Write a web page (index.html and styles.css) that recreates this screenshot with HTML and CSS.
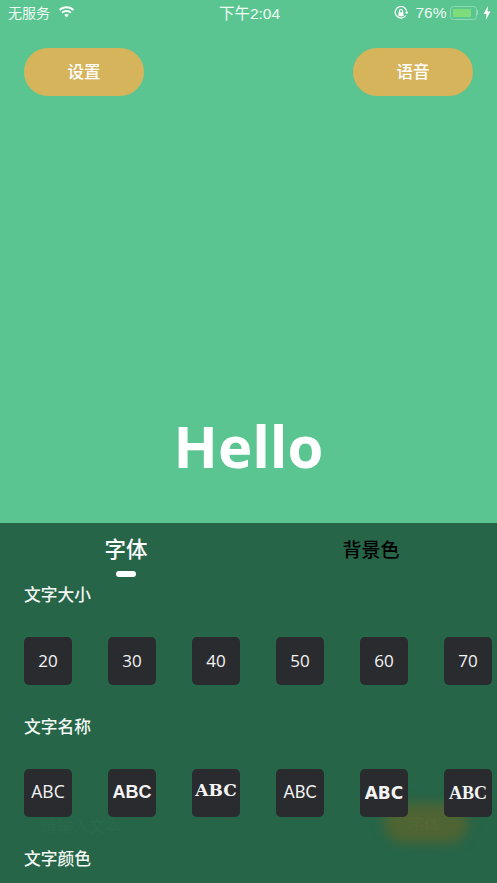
FILE: index.html
```
<!DOCTYPE html>
<html lang="zh">
<head>
<meta charset="utf-8">
<title>Hello</title>
<link rel="stylesheet" href="styles.css">
</head>
<body>
<div class="app">
  <header class="status">
    <div class="status-left">
      <span>无服务</span>
      <svg class="wifi" viewBox="0 0 17 13"><path d="M8.500 2.200c2.400 0 4.600.9 6.300 2.500l1.300-1.400C14.100 1.300 11.400.2 8.500.2S2.900 1.300.9 3.300l1.300 1.400C3.900 3.100 6.100 2.200 8.500 2.200zM8.500 6c1.400 0 2.700.5 3.700 1.500l1.400-1.400C12.200 4.800 10.400 4 8.500 4s-3.700.8-5.100 2.100l1.400 1.400C5.800 6.500 7.100 6 8.500 6zM8.500 7.900c-.9 0-1.700.3-2.300.9l2.300 2.800 2.300-2.800c-.6-.6-1.400-.9-2.300-.9z"/></svg>
    </div>
    <div class="status-time">下午2:04</div>
    <div class="status-right">
      <svg class="lock" viewBox="0 0 14 14"><path class="lock-ring" d="M11.800 9.500A5.800 5.800 0 1 1 12.800 6.500"/><path class="lock-solid" d="M11 6h3.600l-1.800 2.300zM4.500 6.200h5v4h-5z"/><path class="lock-shackle" d="M5.500 6.200V5a1.500 1.500 0 0 1 3 0v1.200"/></svg>
      <span class="pct">76%</span>
      <div class="battery"><div class="battery-level"></div></div>
      <div class="battery-nub"></div>
      <svg class="bolt" viewBox="0 0 8 14"><path d="M5 0 .5 8h3L2.800 14 7.500 5.500h-3z"/></svg>
    </div>
  </header>
  <main class="stage">
    <div class="top-actions">
      <button class="pill">设置</button>
      <button class="pill">语音</button>
    </div>
    <div class="hello">Hello</div>
  </main>
  <section class="panel">
    <div class="ghost-input">请输入文本</div>
    <div class="ghost-pill"></div>
    <div class="ghost-pill-text">字体</div>
    <nav class="tabs">
      <div class="tab tab-active">字体<span class="tab-mark"></span></div>
      <div class="tab tab-plain">背景色</div>
    </nav>
    <h2 class="label">文字大小</h2>
    <div class="row">
      <div class="tile size">20</div>
      <div class="tile size">30</div>
      <div class="tile size">40</div>
      <div class="tile size">50</div>
      <div class="tile size">60</div>
      <div class="tile size">70</div>
    </div>
    <h2 class="label">文字名称</h2>
    <div class="row">
      <div class="tile f1">ABC</div>
      <div class="tile f2">ABC</div>
      <div class="tile f3">ABC</div>
      <div class="tile f4">ABC</div>
      <div class="tile f5">ABC</div>
      <div class="tile f6">ABC</div>
    </div>
    <h2 class="label">文字颜色</h2>
  </section>
</div>
</body>
</html>
```
FILE: styles.css
```
* { box-sizing: border-box; }
html, body { margin: 0; padding: 0; }
body { font-family: "Open Sans", "Noto Sans CJK SC", sans-serif; }
.app {
  width: 497px; height: 883px; overflow: hidden;
  display: flex; flex-direction: column;
  background: #5ac591; color: #fff;
}
.status {
  height: 24px; flex: none;
  display: grid; grid-template-columns: 1fr auto 1fr; align-items: center;
  padding: 0 6px 0 8px;
  font-family: "Liberation Sans", "Noto Sans CJK SC", sans-serif;
  font-size: 15.500px; color: #eefaf3;
}
.status-left { display: flex; align-items: center; gap: 8px; font-size: 14px; }
.wifi { width: 17px; height: 13px; fill: #fff; }
.status-time { position: relative; top: 0; }
.status-right { display: flex; align-items: center; justify-content: flex-end; }
.lock { width: 14px; height: 14px; margin-right: 7px; margin-top: 2px; }
.lock-ring { fill: none; stroke: #fff; stroke-width: 1.200; }
.lock-solid { fill: #fff; }
.lock-shackle { fill: none; stroke: #fff; stroke-width: 1.200; }
.pct { margin-right: 3px; margin-top: 1px; }
.battery {
  width: 27px; height: 14px; padding: 2px 5px 2px 2px; margin-top: 1px;
  border: 1px solid #8fd8b6; border-radius: 3.500px;
}
.battery-level { height: 100%; background: #7fdc7a; border-radius: 1px; }
.battery-nub { width: 1.500px; height: 5px; background: #8fd8b6; margin-right: 5px; margin-top: 1px; }
.bolt { width: 8px; height: 14px; fill: #fff; margin-right: 0; margin-top: 1px; }
.stage { flex: 1; display: flex; flex-direction: column; justify-content: space-between; padding-top: 24px; }
.top-actions { display: flex; justify-content: space-between; padding: 0 24px; }
.pill {
  width: 120px; height: 48px; border: 0; border-radius: 24px; padding: 0 0 2px;
  background: #d6b45b; color: #fff;
  font-family: "Noto Sans CJK SC", sans-serif; font-size: 16.500px; font-weight: 500;
}
.hello {
  text-align: center; font-size: 58px; font-weight: 700; line-height: 72px;
  margin-bottom: 41px;
}
.panel {
  position: relative; flex: none; height: 360px; overflow: hidden;
  background: #266548;
}
.ghost-input {
  position: absolute; left: 41px; top: 290px; font-size: 16px; color: #296a4b;
  font-family: "Noto Sans CJK SC", sans-serif;
}
.ghost-pill {
  position: absolute; left: 384px; top: 280px; width: 84px; height: 40px;
  border-radius: 20px; background: #4f6433; filter: blur(6px);
}
.ghost-pill-text {
  position: absolute; left: 408px; top: 288px; font-size: 16px; color: #566633;
  font-family: "Noto Sans CJK SC", sans-serif;
}
.tabs {
  position: relative; height: 60px;
  display: grid; grid-template-columns: 245px 245px; padding-left: 3.500px;
  font-family: "Noto Sans CJK SC", sans-serif;
}
.tab { position: relative; text-align: center; line-height: 30px; padding-top: 11px; }
.tab-active { font-size: 21.500px; font-weight: 500; color: #fff; padding-top: 10px; }
.tab-plain { font-size: 19px; font-weight: 500; color: #000; }
.tab-mark {
  position: absolute; left: 112.500px; top: 48px;
  width: 20px; height: 6px; border-radius: 3px; background: #fff;
}
.label {
  position: relative; margin: 0; padding-left: 24px; height: 24px;
  font-family: "Noto Sans CJK SC", sans-serif;
  font-size: 16.750px; line-height: 22px; font-weight: 500; color: #f2f7f4;
}
.row { position: relative; display: flex; gap: 36px; padding: 30px 0 30px 24px; }
.tile {
  flex: none; width: 48px; height: 48px; border-radius: 5px;
  background: #2a2b2f; color: #f4f4f4;
  display: flex; align-items: center; justify-content: center;
}
.size { font-size: 17px; font-family: "Open Sans", sans-serif; padding-bottom: 2px; }
.f1 { font-family: "Open Sans", sans-serif; font-size: 17.500px; padding-bottom: 5px; }
.f2 { font-family: "Liberation Sans", sans-serif; font-size: 18px; font-weight: 700; padding-bottom: 1px; }
.f3 { font-family: "DejaVu Serif", serif; font-size: 17px; font-weight: 700; padding-bottom: 6px; }
.f4 { font-family: "Lato", sans-serif; font-size: 16.500px; padding-bottom: 2px; }
.f5 { font-family: "DejaVu Sans", sans-serif; font-size: 17px; font-weight: 700; }
.f6 { font-family: "Liberation Serif", serif; font-size: 18px; font-weight: 700; }
```
